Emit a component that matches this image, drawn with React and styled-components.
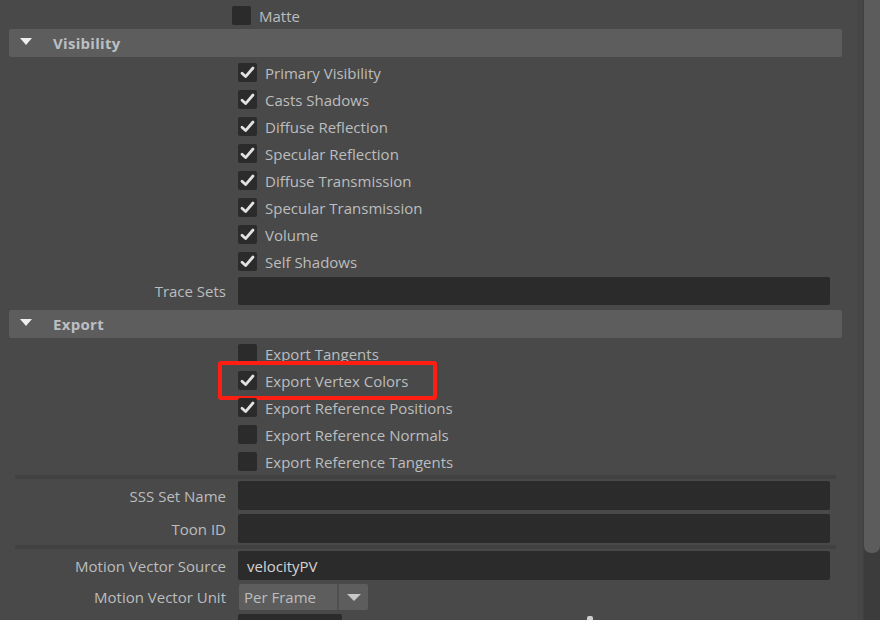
import styled, { createGlobalStyle } from 'styled-components'

const Global = createGlobalStyle`
  html, body { margin: 0; padding: 0; background: #494949; }
  body {
    font-family: "Open Sans", "Noto Sans", "DejaVu Sans", sans-serif;
    font-size: 15px;
    color: #bcbdbe;
    overflow: hidden;
  }
`

const Page = styled.div`
  display: flex;
  align-items: flex-start;
  width: 880px;
  height: 620px;
  overflow: hidden;
`

const Panel = styled.div`
  width: 857px;
  padding-top: 2px;
  display: flex;
  flex-direction: column;

  & > * { flex-shrink: 0; }
`

const Gutter = styled.div`
  align-self: stretch;
  width: 6px;
  background: #464646;
`

const Track = styled.div`
  align-self: stretch;
  width: 16px;
  background: #3c3c3c;
  border-left: 1px solid #404040;
`

const Thumb = styled.div`
  height: 553px;
  background: #5c5c5c;
  border-radius: 0 0 7px 7px;
`

const Header = styled.div`
  display: flex;
  align-items: center;
  height: 28px;
  margin: ${p => p.$top || 0}px 15px 0 9px;
  background: #5d5d5d;
  border-radius: 2px;
  font-weight: 700;
  font-size: 15px;
  letter-spacing: 0.3px;
  color: #bcbfc2;
`

const Caret = styled.span`
  width: 0;
  height: 0;
  margin: 0 21px 3px 11px;
  border-left: 6px solid transparent;
  border-right: 6px solid transparent;
  border-top: 7px solid #eeeeee;
`

const CheckList = styled.div`
  display: flex;
  flex-direction: column;
  padding-top: 2px;
`

const CheckRow = styled.div`
  position: relative;
  display: flex;
  align-items: center;
  height: 27px;
  padding-left: ${p => p.$left || 238}px;
`

const Box = styled.span`
  display: flex;
  align-items: center;
  justify-content: center;
  width: 19px;
  height: 19px;
  margin-right: 8px;
  background: #2b2b2b;
  border-radius: 2px;
`

const Highlight = styled.div`
  position: absolute;
  left: 218px;
  top: -6px;
  width: 219px;
  height: 39px;
  box-sizing: border-box;
  border: 4px solid #ff1e12;
  border-radius: 3px;
`

const FieldRow = styled.div`
  display: flex;
  align-items: center;
  padding: 2px 0;
`

const Label = styled.span`
  width: 226px;
  margin-right: 12px;
  text-align: right;
  white-space: nowrap;
`

const Field = styled.div`
  display: flex;
  align-items: center;
  width: ${p => p.$width || 592}px;
  height: ${p => p.$height || 29}px;
  padding-left: 9px;
  box-sizing: border-box;
  background: #2b2b2b;
  border-radius: 2px;
  color: #d4d4d4;
`

const Separator = styled.div`
  height: 4px;
  margin: 0 21px 0 15px;
  background: #414141;
`

const Dropdown = styled.div`
  display: flex;
  height: 26px;
  margin-left: 1px;
  border-radius: 2px;
  overflow: hidden;
`

const DropValue = styled.div`
  display: flex;
  align-items: center;
  width: 100px;
  padding-left: 5px;
  box-sizing: border-box;
  background: #5d5d5d;
  border-right: 2px solid #4f4f4f;
`

const DropArrow = styled.div`
  display: flex;
  align-items: center;
  justify-content: center;
  width: 29px;
  background: #5d5d5d;

  &::after {
    content: "";
    border-left: 7px solid transparent;
    border-right: 7px solid transparent;
    border-top: 7px solid #c8c8c8;
  }
`

const SliderRow = styled.div`
  position: relative;
  display: flex;
  padding: 2px 0 0 238px;
`

const Handle = styled.span`
  position: absolute;
  left: 587px;
  top: 4px;
  width: 6px;
  height: 12px;
  background: #cfcfcf;
  border-radius: 2px;
`

const Tick = () => (
  <svg width="15" height="13" viewBox="0 0 15 13">
    <path d="M2 7.2 L5.6 10.6 L13 2" fill="none" stroke="#e2e2e2" strokeWidth="2.8" strokeLinecap="round" strokeLinejoin="round" />
  </svg>
)

function Check({ label, checked, left, marked }) {
  return (
    <CheckRow $left={left}>
      <Box>{checked && <Tick />}</Box>
      {label}
      {marked && <Highlight />}
    </CheckRow>
  )
}

const visibility = [
  'Primary Visibility',
  'Casts Shadows',
  'Diffuse Reflection',
  'Specular Reflection',
  'Diffuse Transmission',
  'Specular Transmission',
  'Volume',
  'Self Shadows',
]

const exportItems = [
  { label: 'Export Tangents', checked: false },
  { label: 'Export Vertex Colors', checked: true, marked: true },
  { label: 'Export Reference Positions', checked: true },
  { label: 'Export Reference Normals', checked: false },
  { label: 'Export Reference Tangents', checked: false },
]

export default function App() {
  return (
    <Page>
      <Global />
      <Panel>
        <Check label="Matte" left={232} />

        <Header><Caret />Visibility</Header>
        <CheckList>
          {visibility.map(v => <Check key={v} label={v} checked />)}
        </CheckList>
        <FieldRow>
          <Label>Trace Sets</Label>
          <Field $height={28} />
        </FieldRow>

        <Header $top={3}><Caret />Export</Header>
        <CheckList>
          {exportItems.map(e => (
            <Check key={e.label} label={e.label} checked={e.checked} marked={e.marked} />
          ))}
        </CheckList>

        <Separator />
        <FieldRow>
          <Label>SSS Set Name</Label>
          <Field />
        </FieldRow>
        <FieldRow>
          <Label>Toon ID</Label>
          <Field />
        </FieldRow>
        <Separator />
        <FieldRow>
          <Label>Motion Vector Source</Label>
          <Field>velocityPV</Field>
        </FieldRow>
        <FieldRow>
          <Label>Motion Vector Unit</Label>
          <Dropdown>
            <DropValue>Per Frame</DropValue>
            <DropArrow />
          </Dropdown>
        </FieldRow>
        <SliderRow>
          <Field $width={104} />
          <Handle />
        </SliderRow>
      </Panel>
      <Gutter />
      <Track><Thumb /></Track>
    </Page>
  )
}
